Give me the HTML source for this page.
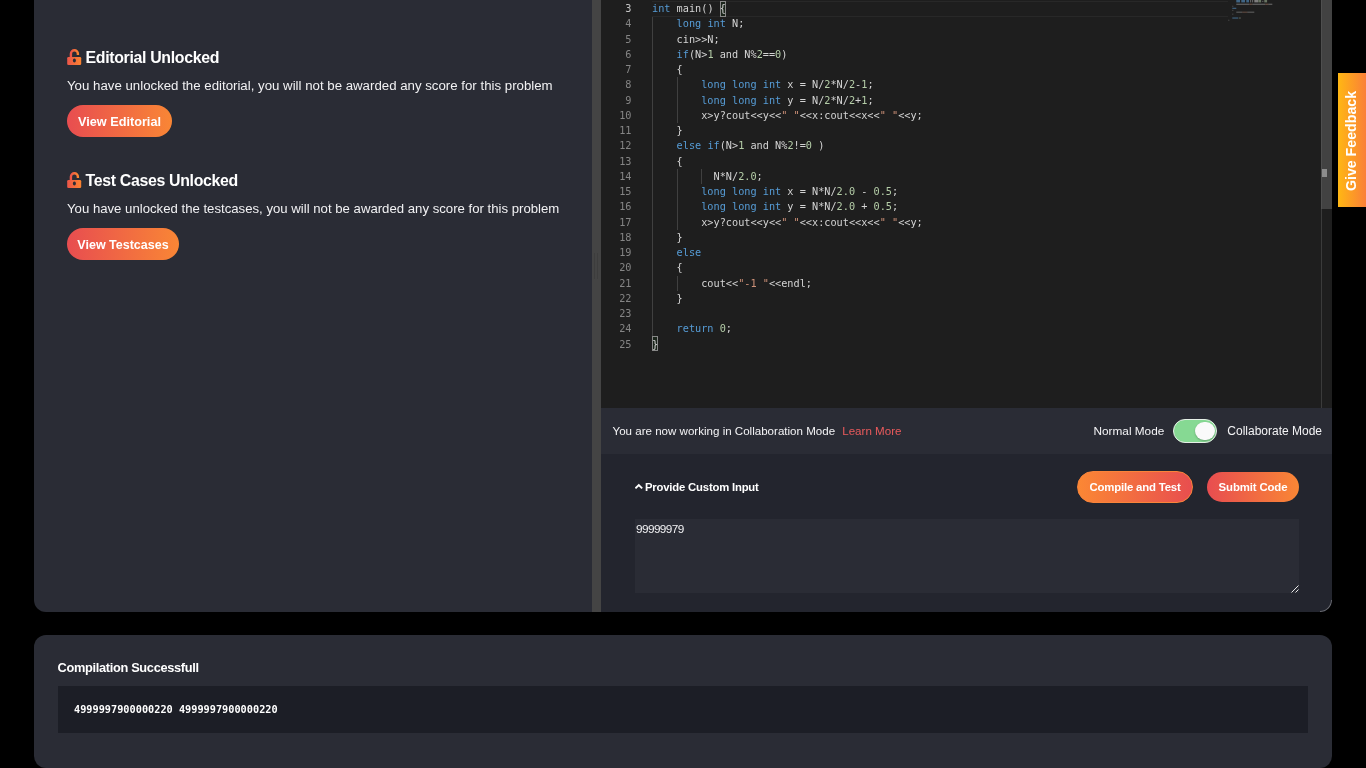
<!DOCTYPE html>
<html lang="en">
<head>
<meta charset="utf-8">
<title>Problem - Editorial Unlocked</title>
<style>
*{box-sizing:border-box;margin:0;padding:0}
html,body{width:1366px;height:768px;overflow:hidden;background:#000}
body{position:relative;font-family:"Liberation Sans",sans-serif;color:#fff}
#wrap{position:absolute;left:0;top:0;width:1366px;height:768px;overflow:hidden;will-change:transform}
.abs{position:absolute}
.panel{position:absolute;left:34px;width:1298px;background:#2a2c35;border-radius:12px}
#top{top:-40px;height:652px;overflow:hidden}
#bottom{top:635px;height:133.4px}
h3{position:absolute;font-weight:700;font-size:15.9px;line-height:20px;white-space:nowrap;letter-spacing:-.33px;color:#fff}
p.t{position:absolute;font-size:13.2px;line-height:18px;white-space:nowrap;color:#f1f1f3}
.btn{position:absolute;border-radius:20px;color:#fff;font-weight:700;font-size:12.4px;text-align:center;white-space:nowrap;
 background:linear-gradient(90deg,#e84d50 0%,#f98635 100%)}
.btn.rev{background:linear-gradient(90deg,#fb8734 0%,#e84e4f 100%);border:1px solid #f9843a}
/* editor */
#split{left:558px;top:40px;width:9px;height:612px;background:#444}
#grip{left:560px;top:293px;width:4px;height:26px;border-left:1px solid #3d3d3d;border-right:1px solid #3d3d3d}
#editor{left:567px;top:40px;width:731px;height:408px;background:#1e1e1e;overflow:hidden;
 font-family:"DejaVu Sans Mono","Liberation Mono",monospace;font-size:10.23px}
#rows{position:absolute;left:0;top:1px;width:720px}
.row{position:relative;height:15.25px;line-height:15.25px;white-space:pre}
.ln{position:absolute;left:0;top:0;width:30.5px;text-align:right;color:#858585}
.ln.act{color:#c6c6c6}
.cl{position:absolute;left:51px;top:0;color:#d4d4d4}
.k{color:#569cd6}.n{color:#b5cea8}.s{color:#ce9178}
.guide{position:absolute;width:1px;background:#404040}
#curline{left:51px;top:1px;width:576px;height:16px;border-top:1px solid #282828;border-bottom:1px solid #282828}
.bm{position:absolute;border:1px solid #888;background:rgba(0,100,0,.1);width:6px;height:16px}
#sbar{left:720px;top:0;width:11px;height:408px;border-left:1px solid #3b3b3b}
#slider{left:720px;top:0;width:11px;height:209px;background:#424242;border-left:1px solid #4f4f4f}
#mark{left:721px;top:169px;width:5px;height:8px;background:#8c8c8c}
#collab{left:567px;top:448px;width:731px;height:46px;background:#2a2c35;font-size:11.8px;line-height:46px;color:#f4f4f6;white-space:nowrap}
#custom{left:567px;top:494px;width:731px;height:158px;background:#23252e}
#toggle{left:572px;top:11px;width:44px;height:24px;border-radius:12px;background:#86d993;border:1px solid #e6efe7}
#knob{left:21.3px;top:2px;width:19.6px;height:18px;border-radius:9.5px;background:#fafafa;box-shadow:0 1px 2px rgba(0,0,0,.25)}
#ta{left:34px;top:65px;width:664px;height:74px;background:#2a2c35;color:#f1f1f3;font-size:11.8px;line-height:14px;padding:3px 1px;letter-spacing:-.6px}
#feedback{left:1338px;top:73px;width:40px;height:134px;background:linear-gradient(90deg,#ffb713 0%,#fa8038 70%)}
#feedback span{position:absolute;left:12.7px;top:67.8px;width:0;height:0}
#feedback b{position:absolute;left:-60px;top:-10px;width:120px;height:20px;line-height:20px;text-align:center;transform:rotate(-90deg);font-size:14.2px;color:#fff;white-space:nowrap}
#outbox{left:24px;top:51px;width:1250px;height:47px;background:#1c1e26}
#outtxt{left:16px;top:0;line-height:47px;font-family:"DejaVu Sans Mono","Liberation Mono",monospace;font-weight:700;font-size:10.25px;color:#fff;white-space:pre}
</style>
</head>
<body>
<div id="wrap">

<div class="panel" id="top">
  <!-- left column -->
  <svg class="abs" style="left:33px;top:89px" width="15" height="17" viewBox="0 0 15 17">
    <defs><linearGradient id="lg1" x1="0" x2="1" y1="0" y2="0"><stop offset="0" stop-color="#eb5549"/><stop offset="1" stop-color="#fb8430"/></linearGradient></defs>
    <path d="M3.9 8.5V4.7a3.5 3.5 0 0 1 7 0v1.2" fill="none" stroke="url(#lg1)" stroke-width="2.4" stroke-linecap="butt"/>
    <rect x="0.2" y="8" width="14" height="8.1" rx="1.3" fill="url(#lg1)"/>
    <ellipse cx="7.4" cy="11.6" rx="1.5" ry="2" fill="#2a2c35"/>
  </svg>
  <h3 style="left:51.5px;top:88px">Editorial Unlocked</h3>
  <p class="t" style="left:33px;top:117.2px;font-size:13.26px">You have unlocked the editorial, you will not be awarded any score for this problem</p>
  <div class="btn" style="left:33px;top:145px;width:105px;height:32px;line-height:34px;font-size:12.7px">View Editorial</div>

  <svg class="abs" style="left:33px;top:212px" width="15" height="17" viewBox="0 0 15 17">
    <defs><linearGradient id="lg2" x1="0" x2="1" y1="0" y2="0"><stop offset="0" stop-color="#eb5549"/><stop offset="1" stop-color="#fb8430"/></linearGradient></defs>
    <path d="M3.9 8.5V4.7a3.5 3.5 0 0 1 7 0v1.2" fill="none" stroke="url(#lg2)" stroke-width="2.4" stroke-linecap="butt"/>
    <rect x="0.2" y="8" width="14" height="8.1" rx="1.3" fill="url(#lg2)"/>
    <ellipse cx="7.4" cy="11.6" rx="1.5" ry="2" fill="#2a2c35"/>
  </svg>
  <h3 style="left:51.5px;top:211px">Test Cases Unlocked</h3>
  <p class="t" style="left:33px;top:240.2px;font-size:13.18px">You have unlocked the testcases, you will not be awarded any score for this problem</p>
  <div class="btn" style="left:33px;top:268px;width:112px;height:32px;line-height:34px;font-size:12.5px">View Testcases</div>

  <div class="abs" id="split"></div>
  <div class="abs" id="grip"></div>

  <div class="abs" id="editor">
    <div class="abs" id="curline"></div>
    <div class="guide" style="left:51px;top:17px;height:320px"></div>
    <div class="guide" style="left:76px;top:77.25px;height:45.75px"></div>
    <div class="guide" style="left:76px;top:168.75px;height:61px"></div>
    <div class="guide" style="left:76px;top:275.5px;height:15.25px"></div>
    <div class="guide" style="left:100px;top:168.75px;height:15.25px"></div>
    <div class="bm" style="left:119px;top:1px"></div>
    <div class="bm" style="left:51px;top:336px;height:15px"></div>
    <div id="rows">
<div class="row"><span class="ln act">3</span><span class="cl"><span class="k">int</span> main() {</span></div>
<div class="row"><span class="ln">4</span><span class="cl">    <span class="k">long</span> <span class="k">int</span> N;</span></div>
<div class="row"><span class="ln">5</span><span class="cl">    cin&gt;&gt;N;</span></div>
<div class="row"><span class="ln">6</span><span class="cl">    <span class="k">if</span>(N&gt;<span class="n">1</span> and N%<span class="n">2</span>==<span class="n">0</span>)</span></div>
<div class="row"><span class="ln">7</span><span class="cl">    {</span></div>
<div class="row"><span class="ln">8</span><span class="cl">        <span class="k">long</span> <span class="k">long</span> <span class="k">int</span> x = N/<span class="n">2</span>*N/<span class="n">2</span>-<span class="n">1</span>;</span></div>
<div class="row"><span class="ln">9</span><span class="cl">        <span class="k">long</span> <span class="k">long</span> <span class="k">int</span> y = N/<span class="n">2</span>*N/<span class="n">2</span>+<span class="n">1</span>;</span></div>
<div class="row"><span class="ln">10</span><span class="cl">        x&gt;y?cout&lt;&lt;y&lt;&lt;<span class="s">" "</span>&lt;&lt;x:cout&lt;&lt;x&lt;&lt;<span class="s">" "</span>&lt;&lt;y;</span></div>
<div class="row"><span class="ln">11</span><span class="cl">    }</span></div>
<div class="row"><span class="ln">12</span><span class="cl">    <span class="k">else</span> <span class="k">if</span>(N&gt;<span class="n">1</span> and N%<span class="n">2</span>!=<span class="n">0</span> )</span></div>
<div class="row"><span class="ln">13</span><span class="cl">    {</span></div>
<div class="row"><span class="ln">14</span><span class="cl">          N*N/<span class="n">2.0</span>;</span></div>
<div class="row"><span class="ln">15</span><span class="cl">        <span class="k">long</span> <span class="k">long</span> <span class="k">int</span> x = N*N/<span class="n">2.0</span> - <span class="n">0.5</span>;</span></div>
<div class="row"><span class="ln">16</span><span class="cl">        <span class="k">long</span> <span class="k">long</span> <span class="k">int</span> y = N*N/<span class="n">2.0</span> + <span class="n">0.5</span>;</span></div>
<div class="row"><span class="ln">17</span><span class="cl">        x&gt;y?cout&lt;&lt;y&lt;&lt;<span class="s">" "</span>&lt;&lt;x:cout&lt;&lt;x&lt;&lt;<span class="s">" "</span>&lt;&lt;y;</span></div>
<div class="row"><span class="ln">18</span><span class="cl">    }</span></div>
<div class="row"><span class="ln">19</span><span class="cl">    <span class="k">else</span></span></div>
<div class="row"><span class="ln">20</span><span class="cl">    {</span></div>
<div class="row"><span class="ln">21</span><span class="cl">        cout&lt;&lt;<span class="s">"-1 "</span>&lt;&lt;endl;</span></div>
<div class="row"><span class="ln">22</span><span class="cl">    }</span></div>
<div class="row"><span class="ln">23</span><span class="cl"></span></div>
<div class="row"><span class="ln">24</span><span class="cl">    <span class="k">return</span> <span class="n">0</span>;</span></div>
<div class="row"><span class="ln">25</span><span class="cl">}</span></div>

    </div>
    <!-- minimap -->
    <svg class="abs" style="left:627px;top:0;opacity:.6" width="50" height="24" viewBox="0 0 50 24">
      <rect x="8.3" y="0.0" width="3.7" height="2.4" fill="#5a9bd3" opacity="0.95"/>
      <rect x="13.3" y="0.0" width="3.7" height="2.4" fill="#5a9bd3" opacity="0.95"/>
      <rect x="18.3" y="0.0" width="2.7" height="2.4" fill="#5a9bd3" opacity="0.95"/>
      <rect x="22.3" y="0.0" width="0.8" height="2.4" fill="#cfcfcf" opacity="0.9"/>
      <rect x="24.3" y="0.0" width="0.8" height="2.4" fill="#cfcfcf" opacity="0.9"/>
      <rect x="26.3" y="0.0" width="3.8" height="2.4" fill="#cfcfcf" opacity="0.9"/>
      <rect x="30.3" y="0.0" width="2.8" height="2.4" fill="#b0c7a3" opacity="0.85"/>
      <rect x="36.3" y="0.0" width="2.8" height="2.4" fill="#b0c7a3" opacity="0.85"/>
      <rect x="34.3" y="0.8" width="1.0" height="1.2" fill="#cfcfcf" opacity="0.7"/>
      <rect x="8.3" y="3.7" width="13.0" height="1.1" fill="#cfcfcf" opacity="0.7"/>
      <rect x="21.3" y="3.7" width="3.0" height="1.1" fill="#c98f76" opacity="0.8"/>
      <rect x="24.3" y="3.7" width="13.0" height="1.1" fill="#cfcfcf" opacity="0.7"/>
      <rect x="37.3" y="3.7" width="3.0" height="1.1" fill="#c98f76" opacity="0.8"/>
      <rect x="40.3" y="3.7" width="4.0" height="1.1" fill="#cfcfcf" opacity="0.7"/>
      <rect x="4.3" y="5.7" width="1.0" height="1.2" fill="#9a9a9a" opacity="0.6"/>
      <rect x="4.3" y="7.7" width="4.0" height="1.3" fill="#5a9bd3" opacity="0.8"/>
      <rect x="4.3" y="9.8" width="1.0" height="1.2" fill="#9a9a9a" opacity="0.6"/>
      <rect x="8.3" y="11.6" width="6.0" height="1.2" fill="#cfcfcf" opacity="0.55"/>
      <rect x="14.3" y="11.6" width="5.0" height="1.2" fill="#c98f76" opacity="0.6"/>
      <rect x="19.3" y="11.6" width="7.0" height="1.2" fill="#cfcfcf" opacity="0.55"/>
      <rect x="4.3" y="13.6" width="1.0" height="1.2" fill="#9a9a9a" opacity="0.6"/>
      <rect x="4.3" y="17.4" width="6.0" height="1.3" fill="#5a9bd3" opacity="0.8"/>
      <rect x="11.3" y="17.4" width="1.0" height="1.3" fill="#b0c7a3" opacity="0.8"/>
      <rect x="12.3" y="17.4" width="0.6" height="1.3" fill="#9a9a9a" opacity="0.6"/>
      <rect x="0.3" y="19.7" width="1.0" height="1.2" fill="#9a9a9a" opacity="0.6"/>
    </svg>
    <div class="abs" id="sbar"></div>
    <div class="abs" id="slider"></div>
    <div class="abs" id="mark"></div>
  </div>

  <div class="abs" id="collab">
    <span class="abs" style="left:11.5px;top:0;font-size:11.57px">You are now working in Collaboration Mode</span>
    <span class="abs" style="left:241.2px;top:0;color:#ea5a5c;font-size:11.6px">Learn More</span>
    <span class="abs" style="left:492.5px;top:0">Normal Mode</span>
    <div class="abs" id="toggle"><div class="abs" id="knob"></div></div>
    <span class="abs" style="left:626.3px;top:0;font-size:12px">Collaborate Mode</span>
  </div>
  <div class="abs" id="custom">
    <svg class="abs" style="left:33.5px;top:29.3px" width="9" height="7" viewBox="0 0 9 7"><path d="M1.1 4.7L3.8 2L6.5 4.7" fill="none" stroke="#fff" stroke-width="1.9" stroke-linecap="square" stroke-linejoin="miter"/></svg>
    <span class="abs" style="left:44px;top:24px;font-size:11.3px;font-weight:700;line-height:18px;white-space:nowrap;letter-spacing:-.185px">Provide Custom Input</span>
    <div class="btn rev" style="left:476px;top:17px;width:116px;height:32px;line-height:31px;font-size:11.4px;letter-spacing:-.18px">Compile and Test</div>
    <div class="btn" style="left:606px;top:18px;width:92px;height:30px;line-height:31px;font-size:11.4px;letter-spacing:-.13px">Submit Code</div>
    <div class="abs" id="ta">99999979</div>
    <svg class="abs" style="left:689px;top:130px" width="9" height="9" viewBox="0 0 9 9"><path d="M8.5 1.5l-7 7M8.5 5.5l-3 3" stroke="#e8e8e8" stroke-width="1" fill="none"/></svg>
  </div>
  <div class="abs" style="left:1286px;top:640px;width:12px;height:12px;border-radius:0 0 12px 0;border-right:1px solid rgba(255,255,255,.33);border-bottom:1px solid rgba(255,255,255,.33)"></div>
</div>

<div class="abs" id="feedback"><span><b>Give Feedback</b></span></div>

<div class="panel" id="bottom">
  <div class="abs" style="left:23.5px;top:23.2px;font-size:12.8px;font-weight:700;line-height:20px;white-space:nowrap;letter-spacing:-.32px">Compilation Successfull</div>
  <div class="abs" id="outbox"><span class="abs" id="outtxt">4999997900000220 4999997900000220</span></div>
</div>

</div>
</body>
</html>
